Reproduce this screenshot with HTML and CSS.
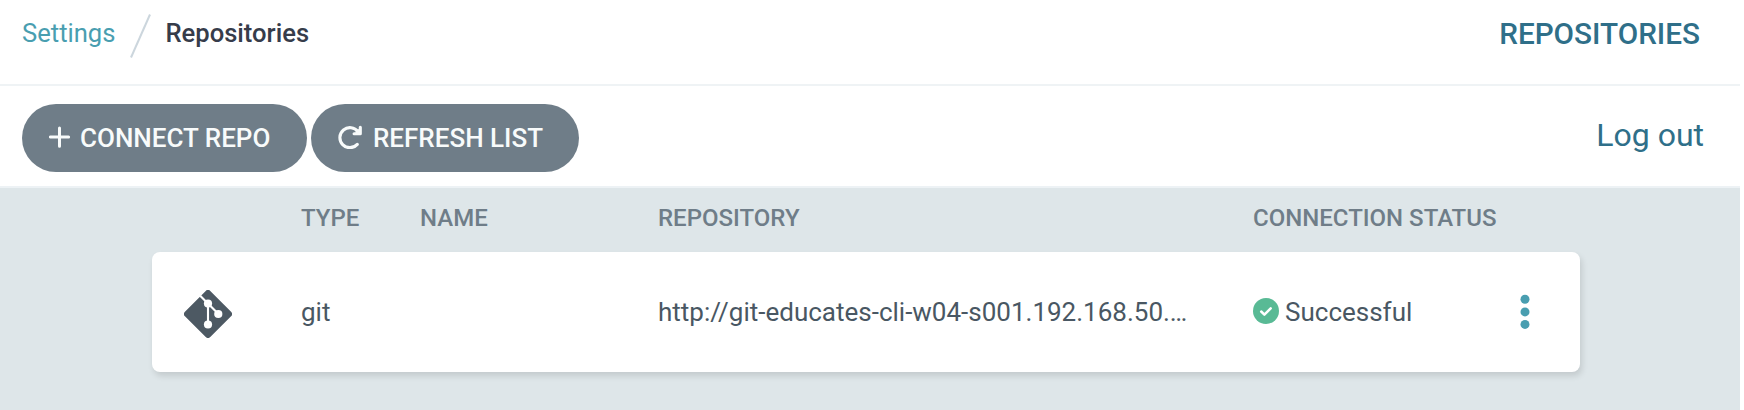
FILE: index.html
```html
<!DOCTYPE html>
<html lang="en">
<head>
<meta charset="utf-8">
<title>Repositories</title>
<link rel="stylesheet" href="styles.css">
</head>
<body>
<div class="page">
  <header class="top-bar">
    <nav class="breadcrumbs">
      <a class="crumb-link" href="#">Settings</a>
      <svg class="crumb-sep" width="24" height="48" viewBox="0 0 24 48"><path d="M2 45.5 21 2.5" stroke="#ccd6dd" stroke-width="2" fill="none"/></svg>
      <span class="crumb-current">Repositories</span>
    </nav>
    <h1 class="page-title">REPOSITORIES</h1>
  </header>
  <div class="toolbar">
    <div class="actions">
      <button class="button button-connect">
        <svg class="button-icon" width="22" height="22" viewBox="0 0 22 22"><path d="M10.5 2v18.2M1.4 11h18.2" stroke="#f8fbfb" stroke-width="3" stroke-linecap="round"/></svg>
        <span>CONNECT REPO</span>
      </button>
      <button class="button button-refresh">
        <svg class="button-icon" width="24" height="24" viewBox="0 0 24 24" fill="none" stroke="#f8fbfb" stroke-width="3.1" stroke-linecap="round" stroke-linejoin="round"><path d="M19.3 19.4A10 10 0 1 1 20 6.8"/><path d="M22.3 2.3v6.4h-6.2"/><path d="M20.8 4.8v2.6h-2.6z" fill="#f8fbfb" stroke-width="1.5"/></svg>
        <span>REFRESH LIST</span>
      </button>
    </div>
    <a class="logout" href="#">Log out</a>
  </div>
  <main class="content">
    <div class="table-grid table-head">
      <span></span><span>TYPE</span><span>NAME</span><span>REPOSITORY</span><span>CONNECTION STATUS</span>
    </div>
    <div class="table-grid table-row">
      <svg class="git-icon" width="48" height="48" viewBox="0 0 48 48"><rect x="6.1" y="6.1" width="35.8" height="35.8" rx="3.2" transform="rotate(45 24 24)" fill="#4d5963"/><g stroke="#fff" stroke-width="2.1"><path d="M16.2 5.8 34.5 24M24 14v20"/></g><g fill="#fff"><circle cx="24" cy="13.6" r="4.1"/><circle cx="34.3" cy="24" r="4.1"/><circle cx="24" cy="34.5" r="4.1"/></g></svg>
      <span>git</span>
      <span></span>
      <span class="repo-url">http://git-educates-cli-w04-s001.192.168.50.…</span>
      <span class="status">
        <svg width="26" height="26" viewBox="0 0 26 26"><circle cx="13" cy="13" r="13" fill="#59ba95"/><path d="m8.2 13.5 3.2 3.1 6.3-6.3" fill="none" stroke="#fff" stroke-width="2.5" stroke-linecap="round" stroke-linejoin="round"/></svg>
        Successful
      </span>
      <svg class="menu" width="10" height="36" viewBox="0 0 10 36" fill="#499eb0"><circle cx="5" cy="5.2" r="4.5"/><circle cx="5" cy="17.9" r="4.5"/><circle cx="5" cy="30.4" r="4.5"/></svg>
    </div>
  </main>
</div>
</body>
</html>
```
FILE: styles.css
```css
* { box-sizing: border-box; }
body { margin: 0; background: #fff; font-family: Roboto, "Liberation Sans", sans-serif; color: #495763; }
a { text-decoration: none; }
.page { width: 1740px; height: 410px; display: flex; flex-direction: column; }
.top-bar { height: 86px; padding: 0 40px 18px 22px; border-bottom: 2px solid #eff3f5; display: flex; justify-content: space-between; align-items: center; }
.breadcrumbs { display: flex; align-items: center; font-size: 25.6px; line-height: 36px; }
.crumb-link { color: #499eb0; }
.crumb-sep { margin: 5px 12px 0 14px; }
.crumb-current { font-weight: 500; color: #363c4a; }
.page-title { margin: 1px 0 0; font-size: 29.7px; font-weight: 500; line-height: 36px; color: #2f6f89; }
.toolbar { height: 102px; padding: 0 36px 0 22px; border-bottom: 2px solid #edf2f5; display: flex; justify-content: space-between; }
.actions { display: flex; gap: 4px; padding-top: 18px; }
.button { height: 68px; padding: 0 0 0 27px; border: 0; border-radius: 34px; background: #6f7d88; color: #f8fbfb; font: 500 26px/36px Roboto, "Liberation Sans", sans-serif; display: flex; align-items: center; white-space: nowrap; }
.button-connect { width: 285px; gap: 9px; }
.button-refresh { width: 268px; gap: 11px; }
.button-icon { margin-top: -3px; }
.logout { padding-top: 30px; font-size: 32px; line-height: 38px; color: #2f6f89; }
.content { flex: 1; padding: 0 160px 0 152px; background: #dee6e9; }
.table-grid { display: grid; grid-template-columns: 119px 119px 238px 595px 262px 1fr; align-items: center; padding-left: 30px; }
.table-head { height: 64px; padding-bottom: 4px; font-size: 24px; font-weight: 500; color: #6f7d88; white-space: nowrap; }
.table-row { height: 120px; border-radius: 8px; background: #fff; font-size: 26px; box-shadow: 2px 4px 6px rgba(0, 0, 0, .12); }
.git-icon { margin: 4px 0 0 2px; }
.repo-url { white-space: nowrap; }
.status { display: flex; align-items: center; gap: 6px; }
.status svg { margin-top: -3px; }
.menu { margin-left: 5px; }
```
